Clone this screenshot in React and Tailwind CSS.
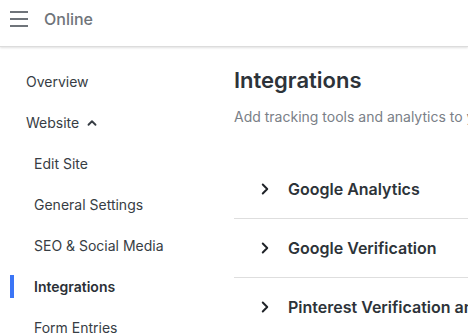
import { ChevronRight, ChevronUp } from 'lucide-react';

const subItems = ['Edit Site', 'General Settings', 'SEO & Social Media', 'Integrations', 'Form Entries'];
const integrations = ['Google Analytics', 'Google Verification', 'Pinterest Verification and Tracking'];

function App() {
  return (
    <div className="h-[335px] w-[468px] overflow-hidden bg-white font-['Inter',sans-serif] text-[#373d44]">
      <header className="flex h-[47px] items-center border-b border-[#dcdcdc] pb-[9px] shadow-[0_1px_2px_rgba(0,0,0,0.12)]">
        <div className="ml-[10px] flex w-[18px] flex-col gap-[5px]">
          <span className="h-[2px] bg-[#6f747a]" />
          <span className="h-[2px] bg-[#6f747a]" />
          <span className="h-[2px] bg-[#6f747a]" />
        </div>
        <span className="ml-[16px] text-[16px] font-medium text-[#6f747a]">Online</span>
      </header>

      <div className="flex">
        <nav className="w-[234px] shrink-0 pt-[14px] text-[14px]">
          <div className="flex h-[41px] items-center pl-[26px]">Overview</div>
          <div className="flex h-[41px] items-center gap-[6px] pl-[26px]">
            Website
            <ChevronUp className="h-[14px] w-[14px]" strokeWidth={3.2} />
          </div>
          {subItems.map((item) => (
            <div className="relative flex h-[41px] items-center pl-[34px]" key={item}>
              {item === 'Integrations' && (
                <span className="absolute left-[10px] top-[9px] h-[23px] w-[4px] bg-[#3b75f6]" />
              )}
              <span className={item === 'Integrations' ? 'font-semibold text-[#2b3036]' : ''}>{item}</span>
            </div>
          ))}
        </nav>

        <main className="min-w-0 flex-1 pt-[19px]">
          <h1 className="whitespace-nowrap text-[22px] font-semibold leading-[28px] text-[#2d3339]">Integrations</h1>
          <p className="mt-[13px] whitespace-nowrap text-[14px] leading-[20px] text-[#7a8087]">
            Add tracking tools and analytics to your website
          </p>
          <div className="mt-[33px]">
            {integrations.map((name) => (
              <div className="flex h-[59px] items-center border-b border-[#dedede] pl-[22px]" key={name}>
                <ChevronRight className="h-[18px] w-[18px] shrink-0 text-[#1f2328]" strokeWidth={2.6} />
                <span className="ml-[14px] whitespace-nowrap text-[16px] font-semibold text-[#2d3339]">{name}</span>
              </div>
            ))}
          </div>
        </main>
      </div>
    </div>
  );
}

export default App;
